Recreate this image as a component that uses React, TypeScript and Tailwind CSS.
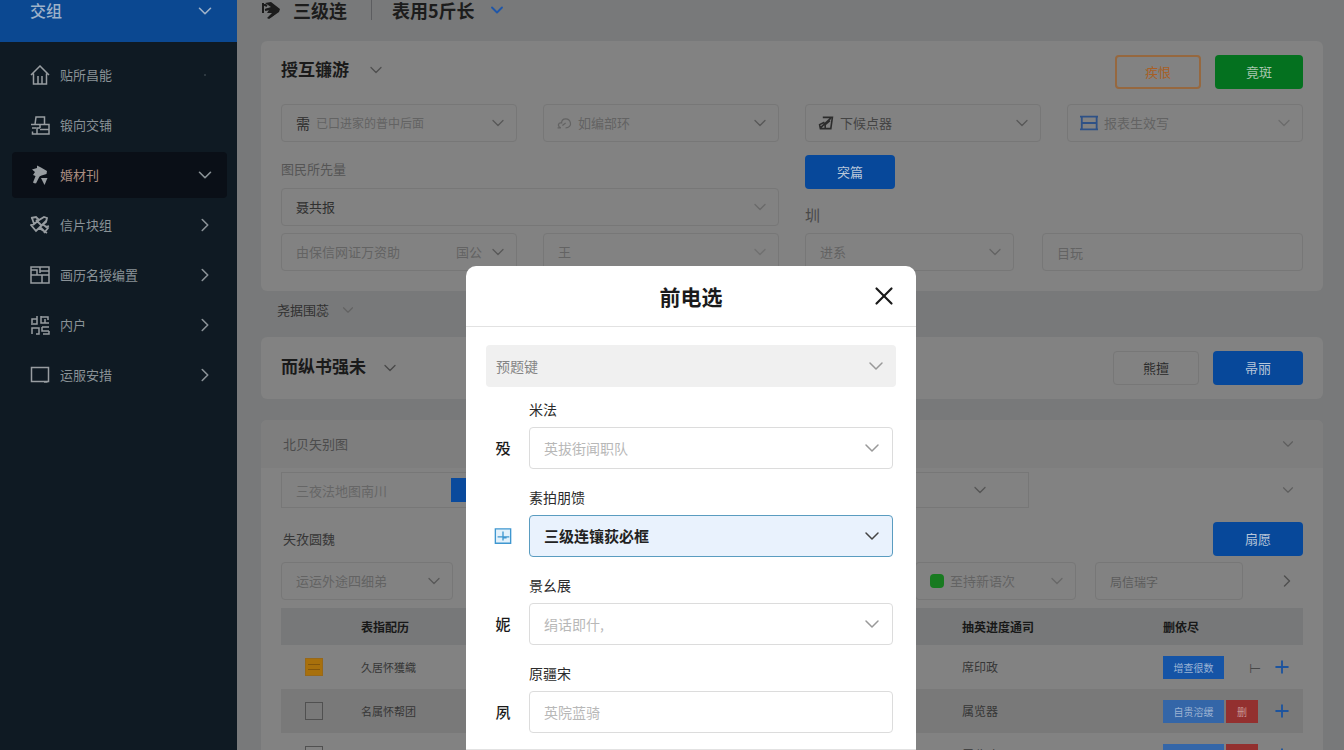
import React, { useId } from "react";
import { ChevronDown, ChevronRight, Plus, X } from "lucide-react";

type IconProps = { className?: string };

function Svg({ className = "", children }: IconProps & { children: React.ReactNode }) {
  return (
    <svg viewBox="0 0 20 20" fill="none" stroke="currentColor" strokeWidth="1.5" className={className} aria-hidden="true">
      {children}
    </svg>
  );
}

const HomeIcon = (p: IconProps) => (
  <Svg {...p}>
    <path d="M1 10 10 1l9 9M3.5 8.5V19h13V8.5M3.5 19h13M8 19v-8M12 19v-8" />
  </Svg>
);
const BoxIcon = (p: IconProps) => (
  <Svg {...p}>
    <path d="M5 9.500 6 2h8.500v7.500M1 9.500h18V19H2.500v-2.500M2 13h4M10 9.500V13M10 13H7v6M10 14.500h9" />
  </Svg>
);
const RunnerIcon = (p: IconProps) => (
  <Svg {...p}>
    <path d="M4 18 8 8M9 10l-4 8" strokeWidth="2.2" />
    <path d="M2 4.500 7 3l0-2.500 4 2 6 3.500-.5 3-5 1.500L8 12 3 10l2-3z" fill="currentColor" stroke="none" />
    <path d="M11 13h6.500l-3 7z" fill="currentColor" stroke="none" />
  </Svg>
);
const GearIcon = (p: IconProps) => (
  <Svg {...p}>
    <path d="M1 3l5-1 3 3 5-3 3 1-1 4-6 5 4 4M2 3l2 6-3 1 5 6 3-3 8 5M6 5l5 5M9 13l8-8M12 9l6 4-4 5M3 10l6-5M15 12l4-1" strokeWidth="1.8" />
  </Svg>
);
const GridIcon = (p: IconProps) => (
  <Svg {...p}>
    <path d="M1 2h18v16H1zM1 10h18M10 2v6M7 10V5H1M12 10v8M10 6h9" />
  </Svg>
);
const BlocksIcon = (p: IconProps) => (
  <Svg {...p}>
    <path d="M2 8V4h5V1M7 4v5H1M11 1v7h8M11 2h7v3M15 8V4M2 19v-6h7v6H6M12 12h7M12 12v4h7M13 19h6v-3" />
  </Svg>
);
const ScreenIcon = (p: IconProps) => (
  <Svg {...p}>
    <path d="M1.500 2.500h17v14h-17zM14 17h3.500" />
  </Svg>
);
const BrandIcon = (p: IconProps) => (
  <Svg {...p}>
    <path d="M2 3v10M2 4l4 2M4 10l5-1M9 17l5-4" strokeWidth="2" />
    <path d="M4 3l6-1 9 7-1 3-10 7-2-1 5-5H6l2-3-4-1 6-2z" fill="currentColor" stroke="none" />
  </Svg>
);
const CloudIcon = (p: IconProps) => (
  <Svg {...p}>
    <path d="M2 16h4c-5-2-3-7 1-6 0-7 10-7 11 0 1 3-2 6-6 6M8 13l4-3" />
  </Svg>
);
const EditIcon = (p: IconProps) => (
  <Svg {...p}>
    <path d="M6 3h12l-2 14H3l-1-5 6-3M3 16 16 4M9 16v-4l6-5" strokeWidth="2" />
  </Svg>
);
const ListIcon = (p: IconProps) => (
  <Svg {...p}>
    <path d="M0 3h20M2 10h17M0 17h20M2 3v14M18.500 3v14" strokeWidth="2" />
  </Svg>
);
const TableIcon = (p: IconProps) => (
  <Svg {...p}>
    <path d="M1.500 2h17v16h-17z" fill="#e3f1fb" />
    <path d="M4 11h13M10 5v10M10 12h4" />
  </Svg>
);

type PickProps = {
  text: string;
  lead?: React.ReactNode;
  label?: string;
  id?: string;
  className?: string;
  tone?: string;
  chevron?: string;
  extra?: string;
};

function Pick({ text, lead, label, id, className = "pl-3.5", tone = "text-[13px] text-[#636363]", chevron = "text-[#585858]", extra }: PickProps) {
  return (
    <div className={`flex h-[38px] min-w-0 items-center gap-1.5 rounded border border-[#777] pr-2 ${tone} ${className}`}>
      {lead}
      <select id={id} aria-label={id ? undefined : label ?? text} className="h-full min-w-0 flex-1 appearance-none bg-transparent outline-none">
        <option>{text}</option>
      </select>
      {extra && <span>{extra}</span>}
      <ChevronDown className={`pointer-events-none size-5 shrink-0 ${chevron}`} strokeWidth={1.5} />
    </div>
  );
}

function Solid({ children, className = "w-[90px] bg-[#07489a] text-[#b9c7d9]" }: { children: React.ReactNode; className?: string }) {
  return (
    <button type="button" className={`h-[34px] shrink-0 rounded text-[13px] ${className}`}>
      {children}
    </button>
  );
}

const navItems = [
  { text: "贴所昌能", icon: HomeIcon, tail: "dot" },
  { text: "锻向交铺", icon: BoxIcon, tail: "none" },
  { text: "婚材刊", icon: RunnerIcon, tail: "down" },
  { text: "信片块组", icon: GearIcon, tail: "right" },
  { text: "画历名授编置", icon: GridIcon, tail: "right" },
  { text: "内户", icon: BlocksIcon, tail: "right" },
  { text: "运服安措", icon: ScreenIcon, tail: "right" },
];

function Sidebar() {
  return (
    <aside className="w-[237px] shrink-0 bg-[#0f1a23]">
      <div className="flex h-[42px] items-start justify-between bg-[#0b4891] pl-[30px] pr-[21px] text-[#9fb2c9]">
        <span className="text-base leading-5 font-medium">交组</span>
        <ChevronDown className="size-[22px]" strokeWidth={1.75} />
      </div>
      <nav className="flex flex-col gap-1 pt-2.5 pr-2.5 pl-3">
        {navItems.map(({ text, icon: Icon, tail }) => (
          <a
            key={text}
            href="#"
            className={`flex h-[46px] items-center gap-2.5 rounded-sm pl-[18px] pr-[11px] text-[13px] ${
              tail === "down" ? "bg-[#0a0f17] text-[#ab8d80]" : "text-[#8a9297]"
            }`}
          >
            <Icon className="size-5 shrink-0 text-[#989da1]" />
            <span className="flex-1">{text}</span>
            {tail === "down" && <ChevronDown className="size-[22px] text-[#8a9297]" strokeWidth={1.75} />}
            {tail === "right" && <ChevronRight className="size-[22px]" strokeWidth={1.75} />}
            {tail === "dot" && <span className="mr-2.5 size-0.5 rounded-full bg-[#39434b]" />}
          </a>
        ))}
      </nav>
    </aside>
  );
}

function FilterCard() {
  return (
    <section className="rounded-md bg-[#828282] px-5 pt-3.5 pb-5">
      <div className="flex h-[34px] items-start">
        <h2 className="text-[17px] leading-7 font-bold text-[#1a1a1a]">授互镰游</h2>
        <ChevronDown className="mt-[5px] ml-[17px] size-5 text-[#4f4f4f]" strokeWidth={1.5} />
        <div className="ml-auto flex gap-3.5">
          <Solid className="w-[86px] border-2 border-[#96683f] text-[#a85f25]">疾恨</Solid>
          <Solid className="w-[88px] bg-[#04711f] text-[#a6c6ad]">竟斑</Solid>
        </div>
      </div>
      <div className="mt-[15px] grid grid-cols-4 gap-x-[26px]">
        <Pick
          text="已口进家的普中后面"
          label="类别"
          className="pl-3.5"
          tone="text-[12px] text-[#636363]"
          lead={<span className="text-[14px] text-[#2c2c2c]">需</span>}
        />
        <Pick text="如编部环" className="pl-3" lead={<CloudIcon className="size-4" />} />
        <Pick text="下候点器" className="pl-3" tone="text-[13px] text-[#444]" lead={<EditIcon className="size-4 text-[#2c2c2c]" />} />
        <Pick text="报表生效写" className="pl-3" chevron="text-[#6c6c6c]" lead={<ListIcon className="size-[18px] text-[#2e5186]" />} />
      </div>
      <div className="mt-[13px] grid grid-cols-2 gap-x-[26px] pb-[7px]">
        <div className="flex flex-col">
          <label htmlFor="amount" className="mb-[5px] text-[13px] leading-7 text-[#555]">图民所先量</label>
          <Pick id="amount" text="聂共报" tone="text-[13px] text-[#303030]" chevron="text-[#6a6a6a]" />
        </div>
        <div className="flex flex-col items-start">
          <Solid>突篇</Solid>
          <label htmlFor="zone" className="pt-[18px] text-[15px] leading-4 text-[#484848]">圳</label>
        </div>
      </div>
      <div className="grid grid-cols-2 gap-x-[26px]">
        <div className="grid grid-cols-2 gap-x-[26px]">
          <Pick text="由保信网证万资助" extra="国公" />
          <Pick text="王" chevron="text-[#707070]" />
        </div>
        <div className="grid grid-cols-[4fr_5fr] gap-x-7">
          <Pick id="zone" text="进系" chevron="text-[#646464]" />
          <input
            aria-label="目玩"
            placeholder="目玩"
            className="h-[38px] min-w-0 rounded border border-[#777] bg-transparent px-3.5 text-[13px] outline-none placeholder:text-[#636363]"
          />
        </div>
      </div>
    </section>
  );
}

const rows = [
  { name: "久居怀獲織", value: "席印政", tag: "增查很数", kind: "first" },
  { name: "名属怀帮团", value: "属览器", tag: "自贵溶缓", kind: "rest" },
  { name: "久属环帮团", value: "属览政", tag: "自贵溶缓", kind: "rest" },
];

function DataTable() {
  return (
    <table className="mt-2 w-full table-fixed text-left text-[12px] text-[#363636]">
      <thead>
        <tr className="h-[37px] bg-[#777879] text-[#181818]">
          <th className="w-20" aria-label="选择" />
          <th className="font-bold">表指配历</th>
          <th className="w-[201px] font-bold">抽英进度通司</th>
          <th className="w-[140px] font-bold">删依尽</th>
        </tr>
      </thead>
      <tbody>
        {rows.map((r) => (
          <tr key={r.name} className="h-11 even:bg-[#797979]">
            <td className="pl-6">
              {r.kind === "first" ? (
                <label className="flex size-[18px] flex-col items-stretch justify-center gap-1 border border-[#97681a] bg-[#a8700c] px-0.5">
                  <input type="checkbox" defaultChecked aria-label={r.name} className="sr-only" />
                  <span className="h-px bg-[#83560c]" />
                  <span className="h-px bg-[#83560c]" />
                </label>
              ) : (
                <input type="checkbox" aria-label={r.name} className="block size-[18px] appearance-none border border-[#505050]" />
              )}
            </td>
            <td className="text-[11px]">{r.name}</td>
            <td>{r.value}</td>
            <td>
              <div className="flex items-center text-[10px]">
                <button type="button" className={`h-[23px] w-[61px] ${r.kind === "first" ? "bg-[#1554a6] text-[#9bb3d4]" : "bg-[#3466a8] text-[#9db3d2]"}`}>
                  {r.tag}
                </button>
                {r.kind === "first" ? (
                  <span className="w-12 pl-[25px] text-[14px] text-[#484848]">⊢</span>
                ) : (
                  <button type="button" className="mr-3.5 ml-0.5 h-[23px] w-8 bg-[#93302f] text-[#c69492]">删</button>
                )}
                <button type="button" aria-label="添加">
                  <Plus className="size-5 text-[#1d549e]" strokeWidth={2.25} />
                </button>
              </div>
            </td>
          </tr>
        ))}
      </tbody>
    </table>
  );
}

function Content() {
  return (
    <main className="min-w-0 flex-1 bg-[#78797a] pl-6 pr-[21px]">
      <header className="mb-[21px] flex h-5 items-center text-[#1c1c1c]">
        <BrandIcon className="size-5" />
        <h1 className="ml-3 text-[18px] leading-5 font-bold">三级连</h1>
        <span className="ml-6 h-5 w-px bg-[#5c5d60]" />
        <span className="ml-5 text-[18px] leading-5 font-bold">表用5斤长</span>
        <ChevronDown className="ml-3 size-5 text-[#1f56a8]" strokeWidth={2.25} />
      </header>

      <FilterCard />

      <div className="flex h-[46px] items-center pl-4 pb-2">
        <span className="text-[13px] text-[#303030]">尧据围蕊</span>
        <ChevronDown className="ml-2.5 size-[18px] text-[#626262]" strokeWidth={1.5} />
      </div>

      <section className="flex h-[62px] items-center gap-3.5 rounded-md bg-[#828282] px-5">
        <h2 className="pb-1 text-[17px] leading-7 font-bold text-[#1a1a1a]">而纵书强未</h2>
        <ChevronDown className="size-5 text-[#484848]" strokeWidth={1.5} />
        <Solid className="ml-auto w-[86px] border border-[#777] text-[#2a2a2a]">熊擅</Solid>
        <Solid>帚丽</Solid>
      </section>

      <section className="mt-[21px] rounded-md bg-[#828282]">
        <div className="flex h-12 items-center justify-between rounded-t-md bg-[#7e7e7e] pl-[22px] pr-[26px] text-[13px] text-[#4c4c4c]">
          <span>北贝矢别图</span>
          <ChevronDown className="size-[18px] text-[#5e5e5e]" strokeWidth={1.5} />
        </div>
        <div className="px-5 pt-1">
          <div className="flex items-center justify-between pr-1.5">
            <div className="flex h-9 w-[748px] items-center border border-[#777]">
              <input
                aria-label="三夜法地图南川"
                placeholder="三夜法地图南川"
                className="h-full w-[169px] bg-transparent pl-3.5 text-[13px] outline-none placeholder:text-[#666]"
              />
              <button type="button" className="h-6 w-14 bg-[#0a4a9c] text-[12px] text-[#8fb0dc]">入</button>
              <ChevronDown className="mr-[38px] ml-auto size-5 text-[#555]" strokeWidth={1.5} />
            </div>
            <ChevronDown className="size-[18px] text-[#5e5e5e]" strokeWidth={1.5} />
          </div>
          <div className="mt-3.5 flex items-center justify-between">
            <span className="pl-0.5 text-[13px] text-[#363636]">失孜圆魏</span>
            <Solid>扇愿</Solid>
          </div>
          <div className="mt-1.5 flex items-center">
            <Pick text="运运外途四细弟" className="w-[172px] pl-3.5" />
            <Pick
              text="至持新语次"
              className="ml-auto w-[161px] pl-3.5"
              chevron="text-[#686868]"
              lead={<span className="size-3.5 rounded-sm bg-[#187a20]" />}
            />
            <input
              aria-label="局信瑞字"
              placeholder="局信瑞字"
              className="ml-[19px] h-[38px] w-[148px] rounded border border-[#777] bg-transparent px-3.5 text-[12px] outline-none placeholder:text-[#5c5c5c]"
            />
            <button type="button" aria-label="下一页" className="mr-1.5 ml-[34px]">
              <ChevronRight className="size-5 text-[#505050]" strokeWidth={1.75} />
            </button>
          </div>
          <DataTable />
        </div>
      </section>
    </main>
  );
}

type FieldProps = {
  mark: React.ReactNode;
  label: string;
  text: string;
  kind?: "select" | "active" | "input";
};

function Field({ mark, label, text, kind = "select" }: FieldProps) {
  const id = useId();
  return (
    <div className="grid grid-cols-[34px_1fr] items-center gap-x-[9px] gap-y-2">
      <label htmlFor={id} className="col-start-2 text-[14px] leading-5 text-[#2b2b2b]">{label}</label>
      <span className="flex justify-center text-[15px] leading-5 font-medium text-[#1a1a1a]">{mark}</span>
      {kind === "input" ? (
        <input
          id={id}
          placeholder={text}
          className="h-[42px] min-w-0 rounded border border-[#dcdcdc] px-3.5 text-[14px] outline-none placeholder:text-[#b8b8b8]"
        />
      ) : (
        <div
          className={`flex h-[42px] items-center rounded border pl-3.5 pr-2 ${
            kind === "active"
              ? "border-[#5a9cc0] bg-[#e9f2fd] text-[15px] font-bold text-[#222]"
              : "border-[#dcdcdc] text-[14px] text-[#b8b8b8]"
          }`}
        >
          <select id={id} className="h-full flex-1 appearance-none bg-transparent outline-none">
            <option>{text}</option>
          </select>
          <ChevronDown className={`pointer-events-none size-6 ${kind === "active" ? "text-[#444]" : "text-[#999]"}`} strokeWidth={1.5} />
        </div>
      )}
    </div>
  );
}

function Modal() {
  return (
    <div className="fixed inset-0 flex items-start justify-center overflow-hidden pt-[266px] pl-[38px]">
      <div role="dialog" aria-modal="true" aria-labelledby="dialog-title" className="w-[450px] rounded-t-[10px] bg-white">
        <div className="grid h-[61px] grid-cols-[1fr_auto_1fr] items-center border-b border-[#e2e2e2] pr-[17px] pl-[17px]">
          <h2 id="dialog-title" className="col-start-2 text-[21px] leading-7 font-bold text-[#1a1a1a]">前电选</h2>
          <button type="button" aria-label="关闭" className="justify-self-end">
            <X className="size-[30px] text-[#1a1a1a]" strokeWidth={1.75} />
          </button>
        </div>
        <div className="px-5 pt-[18px] pb-4">
          <div className="flex h-[42px] items-center rounded bg-[#f0f0f0] pr-2 pl-2.5 text-[14px] text-[#858585]">
            <select aria-label="预题键" className="h-full flex-1 appearance-none bg-transparent outline-none">
              <option>预题键</option>
            </select>
            <ChevronDown className="pointer-events-none size-6 text-[#999]" strokeWidth={1.5} />
          </div>
          <div className="mt-3 flex flex-col gap-[18px] pr-[3px]">
            <Field mark="殁" label="米法" text="英拔街闻职队" />
            <Field mark={<TableIcon className="size-[18px] text-[#3f97d0]" />} label="素拍朋馈" text="三级连镶荻必框" kind="active" />
            <Field mark="妮" label="景幺展" text="绢话即什," />
            <Field mark="夙" label="原疆宋" text="英院蓝骑" kind="input" />
          </div>
        </div>
        <div className="h-16 border-t border-[#e2e2e2]" />
      </div>
    </div>
  );
}

export default function App() {
  return (
    <div className="flex h-screen overflow-hidden font-['Noto_Sans_CJK_SC',sans-serif]">
      <Sidebar />
      <Content />
      <Modal />
    </div>
  );
}
